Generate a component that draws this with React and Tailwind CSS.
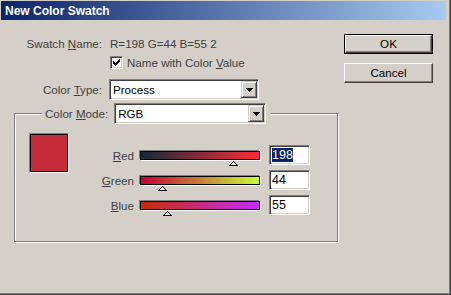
import React from "react";

const sunken =
  "border border-t-[#808080] border-l-[#808080] border-b-white border-r-white shadow-[inset_1px_1px_0_#404040,inset_-1px_-1px_0_#d4d0c8]";
const raised =
  "border border-t-white border-l-white border-b-[#404040] border-r-[#404040] shadow-[inset_-1px_-1px_0_#808080]";

function Combo({ value, className }) {
  return (
    <div className={`flex h-[21px] bg-white ${sunken} ${className}`}>
      <div className="flex-1 pl-[3px] leading-[19px] text-black">{value}</div>
      <div className="my-px mr-px w-[16px] h-[17px] bg-[#d4d0c8] border border-t-[#d4d0c8] border-l-[#d4d0c8] border-b-[#404040] border-r-[#404040] shadow-[inset_1px_1px_0_#fff,inset_-1px_-1px_0_#808080] flex items-center justify-center">
        <svg width="7" height="4" shapeRendering="crispEdges">
          <path d="M0 0h7L3.5 4z" fill="#000" />
        </svg>
      </div>
    </div>
  );
}

const sliders = [
  { key: "R", rest: "ed", value: 198, bar: "bg-[linear-gradient(to_right,#0e2c37,#ff2c37)]", picked: true },
  { key: "G", rest: "reen", value: 44, bar: "bg-[linear-gradient(to_right,#c60037,#c6ff37)]" },
  { key: "B", rest: "lue", value: 55, bar: "bg-[linear-gradient(to_right,#c62c00,#c62cff)]" },
];

export default function App() {
  return (
    <div className="w-[451px] h-[295px] bg-[#d4d0c8] border-r border-b border-[#404040] font-['Liberation_Sans',Arial,sans-serif] text-[11.6px] text-[#404040]">
      <div className="h-full border-r border-b border-[#808080] pt-px pl-px pr-[3px] flex flex-col">
        {/* title bar */}
        <div className="h-[19px] shrink-0 flex items-center pl-[4px] bg-[linear-gradient(to_right,#0a246a,#a6caf0)] text-white font-bold text-[12px]">
          New Color Swatch
        </div>

        <div className="flex flex-1">
          {/* left part */}
          <div className="w-[343px] pt-[17px]">
            <div className="flex leading-[14px]">
              <div className="w-[101px] text-right">
                Swatch <u>N</u>ame:
              </div>
              <div className="ml-[8px]">R=198 G=44 B=55 2</div>
            </div>

            <div className="flex items-center mt-[5px] ml-[109px] h-[13px]">
              <div className={`w-[13px] h-[13px] bg-white flex items-center justify-center ${sunken}`}>
                <svg width="7" height="7" shapeRendering="crispEdges">
                  <path d="M0 2h1v1h1v1h1V3h1V2h1V1h1V0h1v3H6v1H5v1H4v1H3v1H2V6H1V5H0z" fill="#000" />
                </svg>
              </div>
              <span className="ml-[4px] leading-[14px]">
                Name with Color <u>V</u>alue
              </span>
            </div>

            <div className="flex items-center mt-[10px]">
              <div className="w-[101px] text-right">
                Color <u>T</u>ype:
              </div>
              <Combo className="ml-[7px] w-[150px]" value="Process" />
            </div>

            <fieldset className="mt-[3px] ml-[13px] w-[324px] h-[139px] border border-[#808080] shadow-[inset_1px_1px_0_#fff,1px_1px_0_#fff] pl-[14px]">
              <legend className="ml-[13px] pl-[3px] pr-[5px] bg-[#d4d0c8]">
                <div className="flex items-center">
                  <span>
                    Color <u>M</u>ode:
                  </span>
                  <Combo className="ml-[6px] w-[152px]" value="RGB" />
                </div>
              </legend>

              <div className="flex mt-[9px]">
                <div className="w-[40px] h-[40px] border border-t-[#808080] border-l-[#808080] border-b-white border-r-white">
                  <div className="h-full border border-black bg-[#c62c37]" />
                </div>

                <div className="mt-[12px] flex flex-col gap-[5px]">
                  {sliders.map((s) => (
                    <div key={s.key} className="flex items-center h-[20px]">
                      <div className="w-[65px] text-right pt-[2px]">
                        <u>{s.key}</u>
                        {s.rest}
                      </div>
                      <div
                        className={`ml-[6px] w-[120px] h-[9px] relative border border-black shadow-[-1px_-1px_0_#808080,1px_1px_0_#fff] ${s.bar}`}
                      >
                        <svg
                          className="absolute top-[9px]"
                          style={{ left: Math.round(1 + (s.value / 255) * 118 - 4.5) }}
                          width="9"
                          height="5"
                          shapeRendering="crispEdges"
                        >
                          <polygon points="4.5,0.5 8.5,4.5 0.5,4.5" fill="#eeeeee" stroke="#000" strokeWidth="1" />
                        </svg>
                      </div>
                      <div className={`ml-[9px] w-[41px] h-[20px] bg-white pl-[2px] pt-[1px] text-[12.5px] leading-[16px] text-black ${sunken}`}>
                        {s.picked ? (
                          <span className="bg-[#0a246a] text-white">{s.value}</span>
                        ) : (
                          s.value
                        )}
                      </div>
                    </div>
                  ))}
                </div>
              </div>
            </fieldset>
          </div>

          {/* buttons */}
          <div className="w-[89px] pt-[14px] flex flex-col gap-[9px] text-black">
            <div className="h-[20px] border border-black">
              <div className={`h-full flex items-center justify-center ${raised}`}>OK</div>
            </div>
            <div className={`h-[20px] flex items-center justify-center ${raised}`}>Cancel</div>
          </div>
        </div>
      </div>
    </div>
  );
}
